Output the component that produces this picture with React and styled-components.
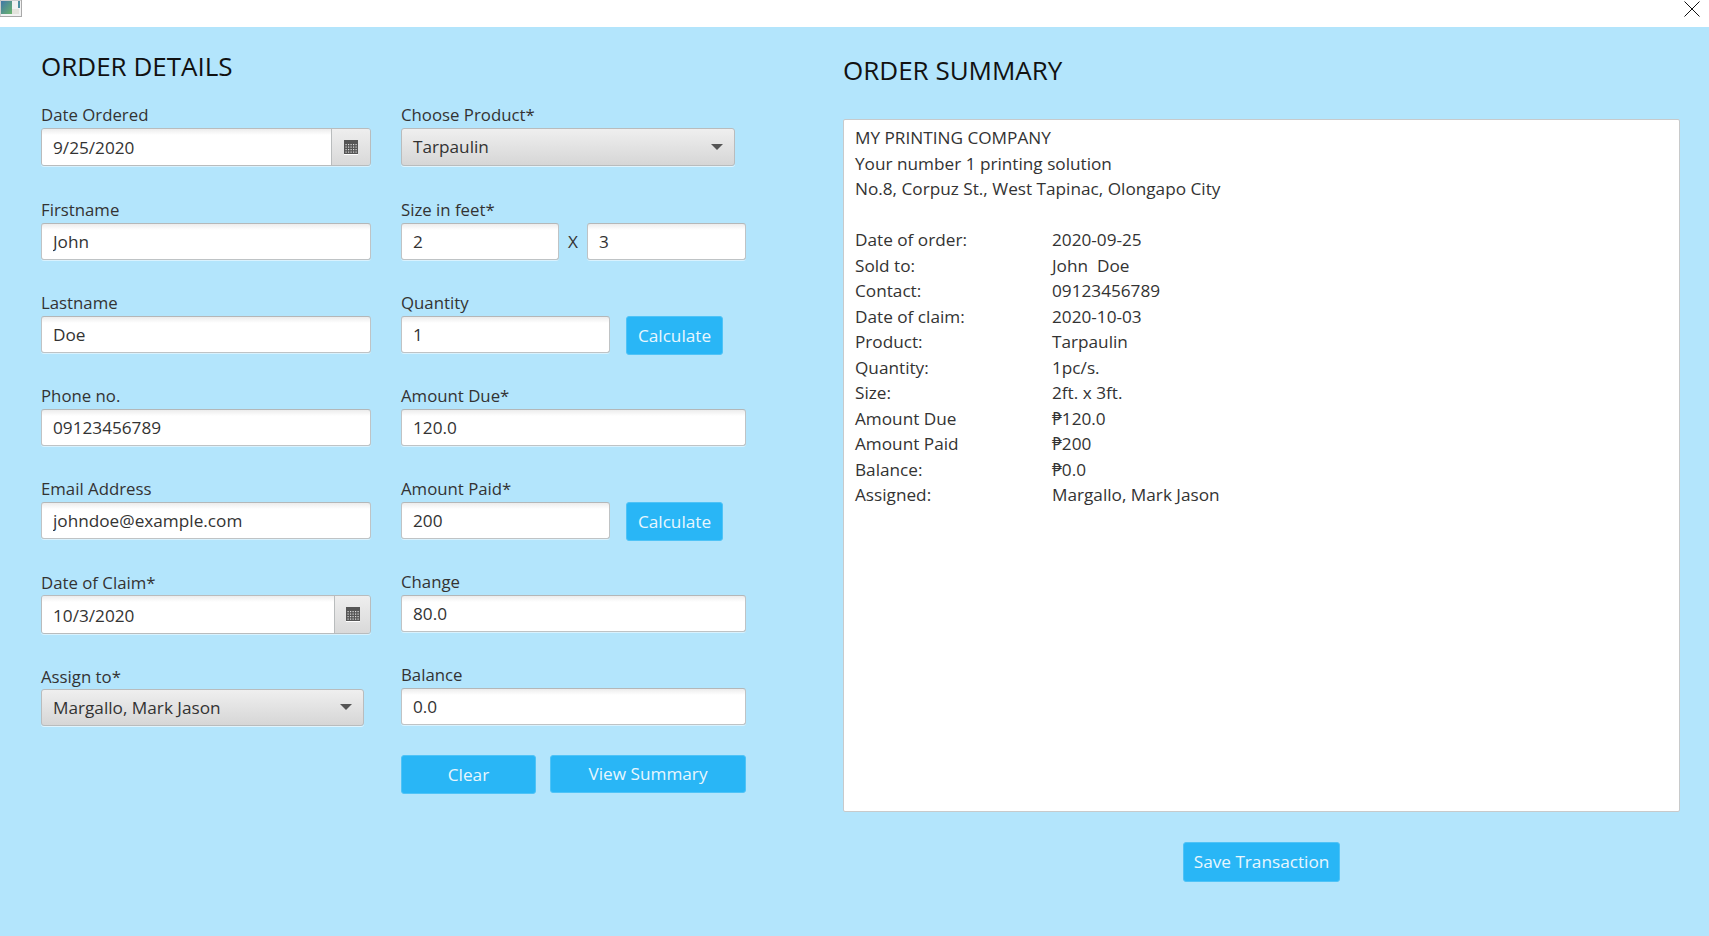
import React from "react";
import styled, { createGlobalStyle } from "styled-components";

const FONT = `"Open Sans", "Noto Sans", sans-serif`;

const Global = createGlobalStyle`
  html, body {
    margin: 0;
    padding: 0;
    height: 100%;
    overflow: hidden;
    background: #b3e5fc;
    font-family: ${FONT};
  }
  * {
    box-sizing: border-box;
  }
`;

const Window = styled.div`
  width: 1709px;
  height: 936px;
  display: flex;
  flex-direction: column;
  background: #b3e5fc;
`;

const TitleBar = styled.div`
  height: 27px;
  flex: none;
  background: #fff;
  display: flex;
  justify-content: space-between;
  align-items: flex-start;
  padding: 0 9px 0 0;
`;

const Main = styled.div`
  flex: 1;
  display: flex;
`;

const OrderPane = styled.section`
  width: 843px;
  flex: none;
  padding: 23px 0 0 41px;
`;

const SummaryPane = styled.section`
  width: 837px;
  flex: none;
  padding: 27px 0 0;
  display: flex;
  flex-direction: column;
`;

const Title = styled.h1`
  margin: 0;
  height: 33px;
  font-size: 26px;
  line-height: 32px;
  font-weight: 400;
  color: #111;
`;

const FormGrid = styled.div`
  display: flex;
  gap: 30px;
  margin-top: 20px;
`;

const Column = styled.div`
  width: ${(p) => p.$width}px;
  display: flex;
  flex-direction: column;
`;

const Field = styled.div`
  height: ${(p) => p.$pitch}px;
  display: flex;
  flex-direction: column;
`;

const Label = styled.label`
  height: 25px;
  font-size: 16.8px;
  line-height: ${(p) => p.$line || 24}px;
  color: #333;
`;

const Row = styled.div`
  display: flex;
  align-items: flex-start;
`;

const Input = styled.input`
  display: block;
  width: ${(p) => (p.$width ? `${p.$width}px` : "100%")};
  height: 37px;
  padding: 0 11px;
  border: 1.5px solid #bfc3c5;
  border-top-color: #b4b7b8;
  border-radius: 3px;
  background: linear-gradient(#ececec, #fff 6px);
  box-shadow: 0 1px 0 rgba(255, 255, 255, 0.5);
  font-family: ${FONT};
  font-size: 17.2px;
  color: #333;
  outline: none;
`;

const DateBox = styled.div`
  display: flex;
  height: ${(p) => p.$height}px;
  border: 1.5px solid #b9bcbd;
  border-radius: 3px;
  overflow: hidden;
  box-shadow: 0 1px 0 rgba(255, 255, 255, 0.5);
`;

const DateInput = styled.input`
  flex: 1;
  min-width: 0;
  padding: 1px 11px 0;
  border: none;
  background: linear-gradient(#ececec, #fff 6px);
  font-family: ${FONT};
  font-size: 17.2px;
  color: #333;
  outline: none;
`;

const DateButton = styled.button`
  width: ${(p) => p.$width}px;
  flex: none;
  padding: 0;
  display: flex;
  align-items: center;
  justify-content: center;
  border: none;
  border-left: 1.5px solid #b9bcbd;
  background: linear-gradient(#eeeeee, #d9d9d9);
`;

const Combo = styled.div`
  width: ${(p) => p.$width}px;
  height: ${(p) => p.$height}px;
  padding: 0 11px 1px;
  display: flex;
  align-items: center;
  justify-content: space-between;
  border: 1.5px solid #b9bcbd;
  border-radius: 3px;
  background: linear-gradient(#efefef, #d6d6d6);
  box-shadow: 0 1px 0 rgba(255, 255, 255, 0.6);
  font-size: 17.2px;
  color: #333;
`;

const Arrow = styled.span`
  width: 0;
  height: 0;
  border-left: 6.5px solid transparent;
  border-right: 6.5px solid transparent;
  border-top: 6px solid #555;
`;

const Times = styled.span`
  width: 28px;
  height: 36px;
  flex: none;
  text-align: center;
  font-size: 17.2px;
  line-height: 37px;
  color: #333;
`;

const Button = styled.button`
  width: ${(p) => (p.$width ? `${p.$width}px` : "auto")};
  height: ${(p) => p.$height || 39}px;
  margin-left: ${(p) => p.$gap || 0}px;
  padding: 0 0 1px;
  flex: none;
  border: 1px solid #4fc3f7;
  border-radius: 3px;
  background: #29b6f6;
  font-family: ${FONT};
  font-size: 17.2px;
  color: #e8f6fe;
`;

const SummaryBox = styled.div`
  margin-top: 32px;
  height: 693px;
  padding: 5px 11px;
  background: #fff;
  border: 1.5px solid #c8cacb;
  border-radius: 2px;
  font-size: 17.2px;
  line-height: 25.5px;
  color: #333;
`;

const Line = styled.div`
  height: 25.5px;
`;

const Spacer = styled(Line)``;

const SummaryRow = styled.div`
  height: 25.5px;
  display: grid;
  grid-template-columns: 197px 1fr;
  white-space: pre;
`;

const SaveRow = styled.div`
  display: flex;
  justify-content: center;
  margin-top: 30px;
`;

const WindowIcon = () => (
  <svg width="23" height="18" viewBox="0 0 23 18">
    <defs>
      <linearGradient id="app-ico" x1="0" y1="0" x2="1" y2="1">
        <stop offset="0" stopColor="#3f77a8" />
        <stop offset="1" stopColor="#6cb56c" />
      </linearGradient>
    </defs>
    <rect x="0" y="0" width="21.5" height="16.5" fill="#f2f2f2" stroke="#a9a9a9" />
    <rect x="1" y="1" width="11" height="13" fill="url(#app-ico)" />
    <rect x="12" y="9" width="7" height="5" fill="#e3e3dc" />
    <rect x="18" y="1" width="2" height="7" fill="#4f8fa0" />
  </svg>
);

const CloseIcon = () => (
  <svg width="16" height="16" viewBox="0 0 16 16" style={{ marginTop: 1 }}>
    <path d="M0.5 0.5L15.5 15.5M15.5 0.5L0.5 15.5" stroke="#111" strokeWidth="1" fill="none" />
  </svg>
);

const CalendarIcon = () => (
  <svg width="14" height="15" viewBox="0 0 14 15">
    <rect x="0" y="0" width="14" height="14" fill="#555" />
    <rect x="0" y="14" width="14" height="1" fill="#fff" />
    {[1.5, 4, 6.5, 9, 11.5].map((x) =>
      [4, 6.5, 9, 11.5].map((y) => (
        <rect key={`${x}-${y}`} x={x} y={y} width="1.2" height="1.2" fill="#ddd" />
      ))
    )}
  </svg>
);

const summary = [
  ["Date of order:", "2020-09-25"],
  ["Sold to:", "John  Doe"],
  ["Contact:", "09123456789"],
  ["Date of claim:", "2020-10-03"],
  ["Product:", "Tarpaulin"],
  ["Quantity:", "1pc/s."],
  ["Size:", "2ft. x 3ft."],
  ["Amount Due", "₱120.0"],
  ["Amount Paid", "₱200"],
  ["Balance:", "₱0.0"],
  ["Assigned:", "Margallo, Mark Jason"],
];

const App = () => {
  return (
    <Window>
      <Global />
      <TitleBar>
        <WindowIcon />
        <CloseIcon />
      </TitleBar>
      <Main>
        <OrderPane>
          <Title>ORDER DETAILS</Title>
          <FormGrid>
            <Column $width={330}>
              <Field $pitch={95}>
                <Label>Date Ordered</Label>
                <DateBox $height={38}>
                  <DateInput readOnly value="9/25/2020" />
                  <DateButton $width={39}>
                    <CalendarIcon />
                  </DateButton>
                </DateBox>
              </Field>
              <Field $pitch={93}>
                <Label>Firstname</Label>
                <Input readOnly value="John" />
              </Field>
              <Field $pitch={93}>
                <Label>Lastname</Label>
                <Input readOnly value="Doe" />
              </Field>
              <Field $pitch={93}>
                <Label>Phone no.</Label>
                <Input readOnly value="09123456789" />
              </Field>
              <Field $pitch={93}>
                <Label>Email Address</Label>
                <Input readOnly value="johndoe@example.com" />
              </Field>
              <Field $pitch={94}>
                <Label $line={26}>Date of Claim*</Label>
                <DateBox $height={39}>
                  <DateInput readOnly value="10/3/2020" />
                  <DateButton $width={36}>
                    <CalendarIcon />
                  </DateButton>
                </DateBox>
              </Field>
              <Field $pitch={62}>
                <Label $line={26}>Assign to*</Label>
                <Combo $width={323} $height={37}>
                  Margallo, Mark Jason
                  <Arrow />
                </Combo>
              </Field>
            </Column>
            <Column $width={345}>
              <Field $pitch={95}>
                <Label>Choose Product*</Label>
                <Combo $width={334} $height={38}>
                  Tarpaulin
                  <Arrow />
                </Combo>
              </Field>
              <Field $pitch={93}>
                <Label>Size in feet*</Label>
                <Row>
                  <Input $width={158} readOnly value="2" />
                  <Times>X</Times>
                  <Input $width={159} readOnly value="3" />
                </Row>
              </Field>
              <Field $pitch={93}>
                <Label>Quantity</Label>
                <Row>
                  <Input $width={209} readOnly value="1" />
                  <Button $width={97} $gap={16}>
                    Calculate
                  </Button>
                </Row>
              </Field>
              <Field $pitch={93}>
                <Label>Amount Due*</Label>
                <Input readOnly value="120.0" />
              </Field>
              <Field $pitch={93}>
                <Label>Amount Paid*</Label>
                <Row>
                  <Input $width={209} readOnly value="200" />
                  <Button $width={97} $gap={16}>
                    Calculate
                  </Button>
                </Row>
              </Field>
              <Field $pitch={93}>
                <Label>Change</Label>
                <Input readOnly value="80.0" />
              </Field>
              <Field $pitch={92}>
                <Label>Balance</Label>
                <Input readOnly value="0.0" />
              </Field>
              <Row>
                <Button $width={135}>Clear</Button>
                <Button $width={196} $height={38} $gap={14}>
                  View Summary
                </Button>
              </Row>
            </Column>
          </FormGrid>
        </OrderPane>
        <SummaryPane>
          <Title>ORDER SUMMARY</Title>
          <SummaryBox>
            <Line>MY PRINTING COMPANY</Line>
            <Line>Your number 1 printing solution</Line>
            <Line>No.8, Corpuz St., West Tapinac, Olongapo City</Line>
            <Spacer />
            {summary.map(([name, value]) => (
              <SummaryRow key={name}>
                <span>{name}</span>
                <span>{value}</span>
              </SummaryRow>
            ))}
          </SummaryBox>
          <SaveRow>
            <Button $width={157} $height={40}>
              Save Transaction
            </Button>
          </SaveRow>
        </SummaryPane>
      </Main>
    </Window>
  );
};

export default App;
